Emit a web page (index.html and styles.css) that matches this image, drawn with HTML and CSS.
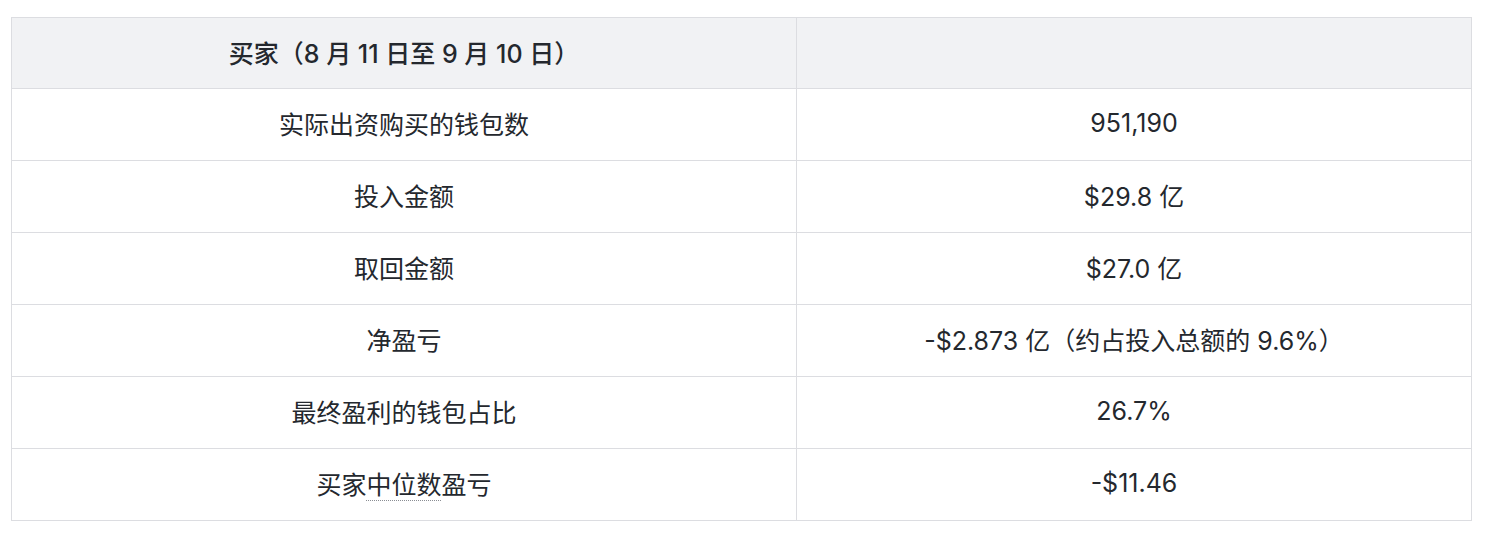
FILE: index.html
```html
<!DOCTYPE html>
<html lang="zh-CN">
<head>
<meta charset="utf-8">
<link rel="stylesheet" href="styles.css">
</head>
<body>
<table class="stats">
  <thead>
    <tr><th class="col-a">买家（8 月 11 日至 9 月 10 日）</th><th class="col-b"></th></tr>
  </thead>
  <tbody>
    <tr><td>实际出资购买的钱包数</td><td>951,190</td></tr>
    <tr><td>投入金额</td><td>$29.8 亿</td></tr>
    <tr><td>取回金额</td><td>$27.0 亿</td></tr>
    <tr><td>净盈亏</td><td>-$2.873 亿（约占投入总额的 9.6%）</td></tr>
    <tr><td>最终盈利的钱包占比</td><td>26.7%</td></tr>
    <tr><td>买家<abbr class="term" title="median">中位数</abbr>盈亏</td><td>-$11.46</td></tr>
  </tbody>
</table>
</body>
</html>
```
FILE: styles.css
```css
html, body {
  margin: 0;
  background: #ffffff;
}
body {
  padding: 17px 0 0 11px;
  font-family: Inter, "Noto Sans CJK SC", sans-serif;
  color: #24282e;
}
.stats {
  border-collapse: collapse;
  width: 1460px;
  table-layout: fixed;
  font-size: 25px;
}
.stats th, .stats td {
  border: 1px solid #dcdde1;
  padding: 0 16px 3px;
  text-align: center;
  vertical-align: middle;
  box-sizing: border-box;
  height: 72px;
}
.stats th {
  height: 71px;
  background: #f1f2f4;
  font-weight: 500;
}
.col-a { width: 785px; }
.col-b { width: 675px; }
.term {
  text-decoration: underline dotted #8a8d93;
  text-decoration-thickness: 1px;
  text-underline-offset: 6px;
}
```
